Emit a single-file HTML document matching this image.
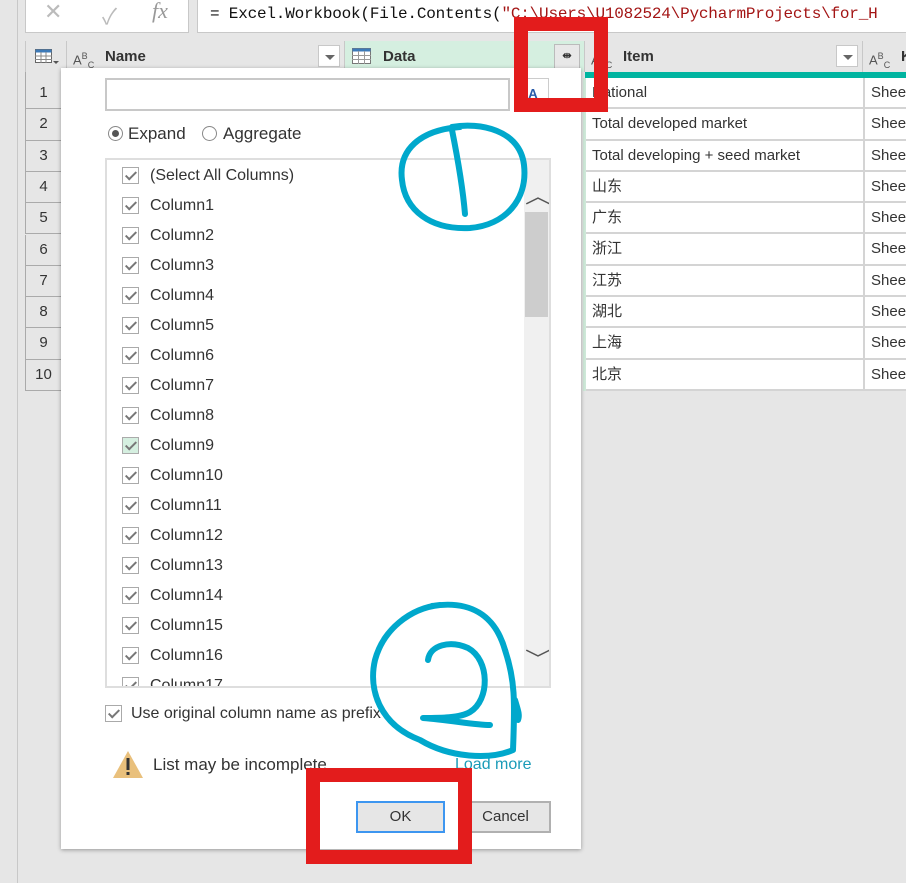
<!DOCTYPE html>
<html><head><meta charset="utf-8"><style>
*{box-sizing:border-box;margin:0;padding:0}
body{width:906px;height:883px;background:#e6e6e6;position:relative;overflow:hidden;font-family:"Segoe UI","Liberation Sans","Noto Sans CJK SC",sans-serif;color:#333}
.abs{position:absolute}
.fbox{background:#fff;border:1px solid #c8c8c8}
.hdr{top:41px;height:31px;background:#e6e6e6;border-right:1px solid #c8c8c8;font-size:15px;font-weight:bold;line-height:31px}
.dd{position:absolute;right:4px;top:4px;width:22px;height:22px;background:#fff;border:1px solid #c8c8c8}
.dd:after{content:"";position:absolute;left:6px;top:9px;border:5px solid transparent;border-top:5px solid #666}
.rn{left:25px;width:37px;height:31.3px;background:#e6e6e6;border:1px solid #aaa;border-top:none;text-align:center;font-size:15px;line-height:30px}
.cell{height:31.3px;background:#fff;border-bottom:2px solid #d4d4d4;font-size:15px;line-height:30px;padding-left:6px;white-space:nowrap;overflow:hidden}
.cb{position:absolute;width:17px;height:17px;border:1px solid #aaa;background:#fff}
.cb:after{content:"";position:absolute;left:5px;top:1px;width:4px;height:9px;border:solid #777;border-width:0 2px 2px 0;transform:rotate(45deg)}
.item{position:absolute;left:150px;font-size:16px;line-height:20px;color:#333;white-space:nowrap}
.red{position:absolute;border:14px solid #e31c1c}
</style></head><body>
<div class="abs" style="left:0;top:0;width:18px;height:883px;border-right:1px solid #c8c8c8;background:#e6e6e6"></div>
<div class="abs fbox" style="left:25px;top:-2px;width:164px;height:35px;color:#bbb;font-size:22px">
<span class="abs" style="left:18px;top:0">✕</span><span class="abs" style="left:76px;top:0">✓</span><span class="abs" style="left:126px;top:-1px;font-family:'Liberation Serif',serif;font-style:italic;color:#999">fx</span></div>
<div class="abs fbox" style="left:197px;top:-2px;width:720px;height:35px;font-family:'Liberation Mono',monospace;font-size:16px;letter-spacing:-0.2px;line-height:30px;padding-left:12px;white-space:nowrap;color:#111">= Excel.Workbook(File.Contents(<span style="color:#a31515">"C:\Users\U1082524\PycharmProjects\for_H</span></div>
<div class="abs hdr" style="left:25px;width:42px;border-left:1px solid #c8c8c8"><svg class="abs" style="left:9px;top:8px" width="24" height="16"><rect x="0.5" y="0.5" width="16" height="13" fill="#fff" stroke="#666"/><rect x="0.5" y="0.5" width="16" height="3" fill="#3d7ab8"/><path d="M0 7h17M0 10.5h17M6 3v11M11 3v11" stroke="#888"/><path d="M18 12l3 3 3-3z" fill="#555"/></svg></div>
<div class="abs hdr" style="left:67px;width:278px;padding-left:38px"><span class="abs" style="left:6px;top:0;font-weight:normal;font-size:13px;color:#555">A<sup style="font-size:9px">B</sup><sub style="font-size:9px">C</sub></span>Name<div class="dd"></div></div>
<div class="abs hdr" style="left:345px;width:240px;background:#d5efe0;padding-left:38px"><svg class="abs" style="left:7px;top:7px" width="20" height="17"><rect x="0.5" y="0.5" width="18" height="15" fill="#fff" stroke="#777"/><rect x="0.5" y="0.5" width="18" height="3" fill="#3d7ab8"/><path d="M0 7.5h19M0 11.5h19M6.5 3v13M12.5 3v13" stroke="#999"/></svg>Data<div class="abs" style="right:4px;top:3px;width:26px;height:25px;background:#e8e8e8;border:1px solid #bbb;font-size:11px;text-align:center;line-height:22px">⇹</div></div>
<div class="abs hdr" style="left:585px;width:278px;padding-left:38px"><span class="abs" style="left:6px;top:0;font-weight:normal;font-size:13px;color:#555">A<sup style="font-size:9px">B</sup><sub style="font-size:9px">C</sub></span>Item<div class="dd"></div></div>
<div class="abs hdr" style="left:863px;width:60px;padding-left:38px"><span class="abs" style="left:6px;top:0;font-weight:normal;font-size:13px;color:#555">A<sup style="font-size:9px">B</sup><sub style="font-size:9px">C</sub></span>K</div>
<div class="abs" style="left:585px;top:72px;width:321px;height:6px;background:#00b4a0"></div>
<div class="abs" style="left:25px;top:72px;width:37px;height:6px;background:#e6e6e6;border-left:1px solid #aaa;border-right:1px solid #aaa"></div>
<div class="abs" style="left:0;top:78px">
<div class="abs rn" style="top:0">1</div><div class="abs rn" style="top:31.3px">2</div><div class="abs rn" style="top:62.6px">3</div><div class="abs rn" style="top:93.9px">4</div><div class="abs rn" style="top:125.2px">5</div><div class="abs rn" style="top:156.5px">6</div><div class="abs rn" style="top:187.8px">7</div><div class="abs rn" style="top:219.1px">8</div><div class="abs rn" style="top:250.4px">9</div><div class="abs rn" style="top:281.7px">10</div>
</div>
<div class="abs" style="left:583px;top:78px;width:3px;height:313px;background:#cfe9d9"></div>
<div class="abs" style="left:586px;top:78px;width:277px">
<div class="cell">National</div><div class="cell">Total developed market</div><div class="cell">Total developing + seed market</div><div class="cell">山东</div><div class="cell">广东</div><div class="cell">浙江</div><div class="cell">江苏</div><div class="cell">湖北</div><div class="cell">上海</div><div class="cell">北京</div>
</div>
<div class="abs" style="left:863px;top:78px;width:50px;border-left:2px solid #d4d4d4">
<div class="cell">Sheet</div><div class="cell">Sheet</div><div class="cell">Sheet</div><div class="cell">Sheet</div><div class="cell">Sheet</div><div class="cell">Sheet</div><div class="cell">Sheet</div><div class="cell">Sheet</div><div class="cell">Sheet</div><div class="cell">Sheet</div>
</div>
<div class="abs" style="left:61px;top:68px;width:520px;height:781px;background:#fff;box-shadow:0 1px 4px rgba(0,0,0,.35)">
<div class="abs" style="left:44px;top:10px;width:405px;height:33px;border:2px solid #c8c8c8"></div>
<div class="abs" style="left:456px;top:10px;width:32px;height:33px;border:1px solid #ccc;font-size:13px;font-weight:bold;color:#2a5caa;text-align:center;line-height:30px;text-decoration:underline">A</div>
<div class="abs" style="left:47px;top:58px;width:15px;height:15px;border:1px solid #888;border-radius:50%"><div style="margin:3px;width:7px;height:7px;border-radius:50%;background:#555"></div></div>
<div class="abs" style="left:67px;top:56px;font-size:17px">Expand</div>
<div class="abs" style="left:141px;top:58px;width:15px;height:15px;border:1px solid #888;border-radius:50%"></div>
<div class="abs" style="left:162px;top:56px;font-size:17px">Aggregate</div>
<div class="abs" style="left:44px;top:90px;width:446px;height:530px;border:2px solid #dedede;overflow:hidden">
 <div class="abs" style="left:417px;top:0;width:25px;height:526px;background:#f0f0f0"></div>
 <div class="abs" style="left:418px;top:52px;width:23px;height:105px;background:#cdcdcd"></div>
 <div class="abs" style="left:421px;top:20px;font-size:20px;color:#555;transform:scaleX(1.3)">︿</div>
 <div class="abs" style="left:421px;top:483px;font-size:20px;color:#555;transform:scaleX(1.3)">﹀</div>
</div>
</div>
<div class="abs" style="left:0;top:0">
<div class="cb" style="left:122px;top:167px"></div><div class="item" style="top:166px">(Select All Columns)</div>
<div class="cb" style="left:122px;top:197px"></div><div class="item" style="top:196px">Column1</div>
<div class="cb" style="left:122px;top:227px"></div><div class="item" style="top:226px">Column2</div>
<div class="cb" style="left:122px;top:257px"></div><div class="item" style="top:256px">Column3</div>
<div class="cb" style="left:122px;top:287px"></div><div class="item" style="top:286px">Column4</div>
<div class="cb" style="left:122px;top:317px"></div><div class="item" style="top:316px">Column5</div>
<div class="cb" style="left:122px;top:347px"></div><div class="item" style="top:346px">Column6</div>
<div class="cb" style="left:122px;top:377px"></div><div class="item" style="top:376px">Column7</div>
<div class="cb" style="left:122px;top:407px"></div><div class="item" style="top:406px">Column8</div>
<div class="cb" style="left:122px;top:437px;background:#d5efe0"></div><div class="item" style="top:436px">Column9</div>
<div class="cb" style="left:122px;top:467px"></div><div class="item" style="top:466px">Column10</div>
<div class="cb" style="left:122px;top:497px"></div><div class="item" style="top:496px">Column11</div>
<div class="cb" style="left:122px;top:527px"></div><div class="item" style="top:526px">Column12</div>
<div class="cb" style="left:122px;top:557px"></div><div class="item" style="top:556px">Column13</div>
<div class="cb" style="left:122px;top:587px"></div><div class="item" style="top:586px">Column14</div>
<div class="cb" style="left:122px;top:617px"></div><div class="item" style="top:616px">Column15</div>
<div class="cb" style="left:122px;top:647px"></div><div class="item" style="top:646px">Column16</div>
<div class="abs" style="left:107px;top:677px;width:416px;height:9px;overflow:hidden"><div class="cb" style="left:15px;top:0"></div><div class="item" style="left:43px;top:-1px">Column17</div></div>
<div class="cb" style="left:105px;top:705px"></div><div class="item" style="left:131px;top:704px">Use original column name as prefix</div>
<svg class="abs" style="left:112px;top:750px" width="32" height="29"><path d="M16 1L31 28H1z" fill="#e9c07c"/><rect x="14.5" y="8" width="3" height="12" fill="#333"/><rect x="14.5" y="22" width="3" height="3" fill="#333"/></svg>
<div class="item" style="left:153px;top:755px;font-size:17px">List may be incomplete</div>
<div class="item" style="left:455px;top:755px;color:#1a9bb8">Load more</div>
<div class="abs" style="left:356px;top:801px;width:89px;height:32px;background:#e6e6e6;border:2px solid #3d96f0;font-size:15px;text-align:center;line-height:28px">OK</div>
<div class="abs" style="left:460px;top:801px;width:91px;height:32px;background:#e6e6e6;border:2px solid #b0b0b0;font-size:15px;text-align:center;line-height:28px">Cancel</div>
</div>
<div class="red" style="left:514px;top:17px;width:94px;height:95px"></div>
<div class="red" style="left:306px;top:768px;width:166px;height:96px"></div>
<svg class="abs" style="left:0;top:0" width="906" height="883" fill="none" stroke="#00a8cc" stroke-width="6" stroke-linecap="round" stroke-linejoin="round">
<path d="M452 127C480 122 520 130 524 165C528 200 505 225 470 228C430 230 405 210 402 180C398 150 420 130 460 127"/>
<path d="M452 130C458 160 463 190 465 214"/>
<path d="M432 606C470 600 495 615 505 650C515 680 515 700 513 750C490 760 450 758 420 740C380 725 368 690 375 660C383 630 410 608 440 605"/>
<path d="M428 660C430 645 450 640 468 648C490 660 490 700 470 712C460 718 440 718 423 718C450 720 475 725 490 725"/>
<path d="M515 700C518 710 520 715 518 720"/>
</svg>
</body></html>
